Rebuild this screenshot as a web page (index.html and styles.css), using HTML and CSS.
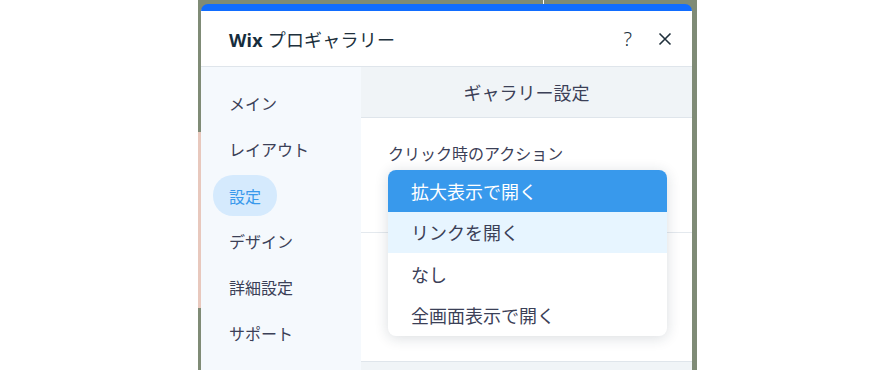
FILE: index.html
```html
<!DOCTYPE html>
<html lang="ja">
<head>
  <meta charset="UTF-8" />
  <meta name="viewport" content="width=device-width, initial-scale=1.0"/>
  <title>Wix プロギャラリー</title>
  <link rel="stylesheet" href="styles.css">
</head>
<body>

  <div class="stage">
    <div class="panel">

      <!-- En-tête du panneau -->
      <header class="panel-header">
        <h1 class="panel-title"><b>Wix</b> プロギャラリー</h1>
        <div class="panel-actions">
          <span class="help">?</span>
          <svg class="close" viewBox="0 0 16 16" aria-label="閉じる">
            <path d="M2.5 2.5 L13.5 13.5 M13.5 2.5 L2.5 13.5"/>
          </svg>
        </div>
      </header>

      <div class="panel-body">
        <nav class="sidebar">
          <div class="nav-item">メイン</div>
          <div class="nav-item">レイアウト</div>
          <div class="nav-item active">設定</div>
          <div class="nav-item">デザイン</div>
          <div class="nav-item">詳細設定</div>
          <div class="nav-item">サポート</div>
        </nav>

        <section class="content">
          <div class="section-title">ギャラリー設定</div>

          <div class="field">
            <div class="field-label">クリック時のアクション</div>
          </div>
          <div class="field field-empty"></div>
          <div class="footer"></div>

          <!-- Menu déroulant ouvert -->
          <ul class="dropdown">
            <li class="option selected">拡大表示で開く</li>
            <li class="option hovered">リンクを開く</li>
            <li class="option">なし</li>
            <li class="option">全画面表示で開く</li>
          </ul>
        </section>
      </div>

    </div>
  </div>

</body>
</html>
```

FILE: styles.css
```css
/* Reset */
* {
  margin: 0;
  padding: 0;
  box-sizing: border-box;
  font-family: "Noto Sans", "Noto Sans CJK JP", sans-serif;
}
body {
  background: #fff;
  color: #3b4057;
  width: 888px;
  height: 370px;
  overflow: hidden;
}

/* Fond de l'éditeur derrière le panneau */
.stage {
  margin-left: 198px;
  width: 499px;
  height: 370px;
  padding: 4px 5px 0 3px;
  background:
    linear-gradient(#fff, #fff) 345px 0 / 1px 4px no-repeat,
    linear-gradient(#e8c8bd, #e8c8bd) 0 132px / 3px 176px no-repeat,
    #7f8b76;
}

.panel {
  width: 491px;
  height: 366px;
  background: #fff;
  border-top: 7px solid #116dff;
  border-radius: 7px 7px 0 0;
  overflow: hidden;
  display: flex;
  flex-direction: column;
}

/* Header */
.panel-header {
  height: 56px;
  flex-shrink: 0;
  display: flex;
  align-items: center;
  justify-content: space-between;
  padding: 0 19px 0 28px;
  border-bottom: 1px solid #dfe5eb;
}
.panel-title {
  font-size: 18px;
  font-weight: 400;
  color: #20303c;
  letter-spacing: 0.2px;
}
.panel-title b {
  font-weight: 700;
  color: #162d3d;
}
.panel-actions {
  display: flex;
  align-items: center;
  gap: 25px;
}
.help {
  font-size: 20px;
  font-weight: 300;
  color: #20303c;
  line-height: 1;
}
.close {
  width: 16px;
  height: 16px;
  stroke: #20303c;
  stroke-width: 1.6;
  fill: none;
}

/* Corps */
.panel-body {
  flex: 1;
  display: flex;
}
.sidebar {
  width: 160px;
  background: #f5f9fd;
  padding-top: 13px;
}
.nav-item {
  height: 40px;
  margin: 3px 0 3px 12px;
  padding: 0 16px;
  display: inline-flex;
  align-items: center;
  border-radius: 20px;
  font-size: 16px;
  color: #3b4057;
  width: max-content;
}
.nav-item.active {
  height: 41px;
  margin-bottom: 2px;
  background: #d5eafd;
  color: #3899ec;
}

.content {
  flex: 1;
  position: relative;
  display: flex;
  flex-direction: column;
}
.section-title {
  height: 51px;
  flex-shrink: 0;
  background: #f0f4f7;
  border-bottom: 1px solid #dfe5eb;
  display: flex;
  align-items: center;
  justify-content: center;
  font-size: 18px;
  color: #3b4057;
}
.field {
  height: 115px;
  flex-shrink: 0;
  padding: 23px 27px 0;
  border-bottom: 1px solid #e4e9ee;
}
.field-label {
  font-size: 16px;
  color: #3b4057;
}
.field-empty {
  height: 129px;
  border-bottom: 1px solid #dfe5eb;
}
.footer {
  flex: 1;
  background: #f0f4f7;
}

/* Dropdown */
.dropdown {
  position: absolute;
  top: 103px;
  left: 27px;
  width: 279px;
  list-style: none;
  background: #fff;
  border-radius: 8px;
  overflow: hidden;
  box-shadow: 0 2px 14px rgba(22, 45, 61, 0.16);
}
.option {
  height: 41.5px;
  padding: 0 23px;
  display: flex;
  align-items: center;
  font-size: 18px;
  color: #3b4057;
}
.option.selected {
  background: #3899ec;
  color: #fff;
}
.option.hovered {
  background: #e7f5ff;
}
```
